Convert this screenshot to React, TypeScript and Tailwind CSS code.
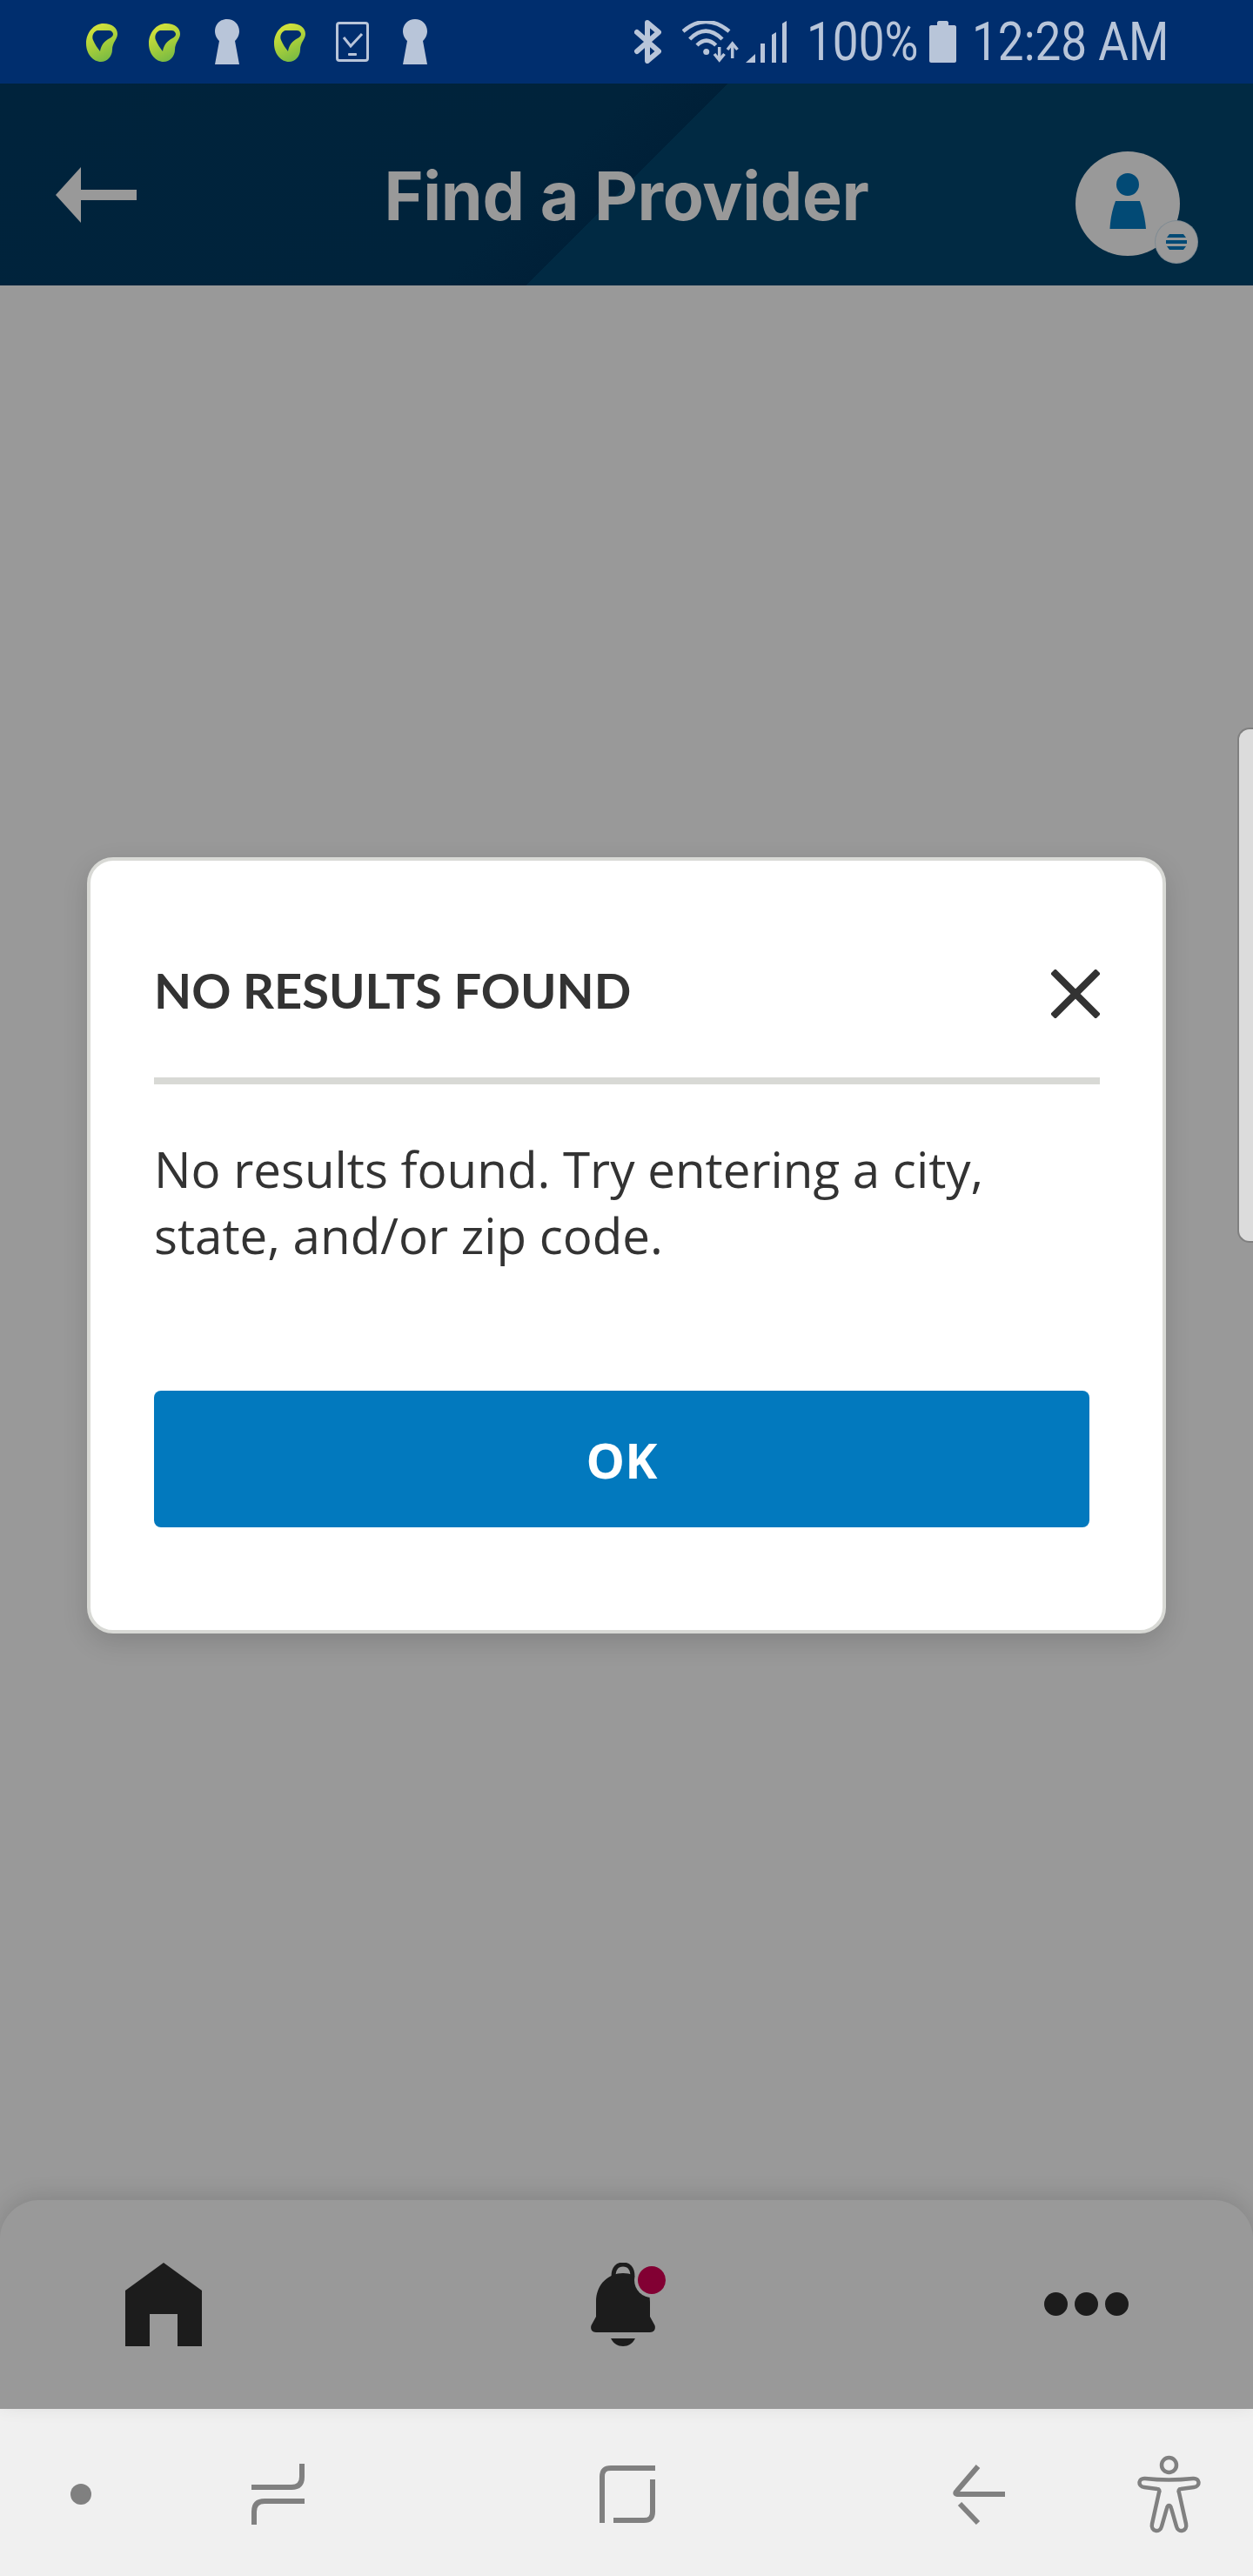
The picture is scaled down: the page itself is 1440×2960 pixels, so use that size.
function Leaf() {
  return (
    <svg width="36" height="44" viewBox="0 0 36 44" className="shrink-0">
      <defs>
        <linearGradient id="leafFill" x1="0.3" y1="0" x2="0.7" y2="1">
          <stop offset="0" stopColor="#d9e43c" />
          <stop offset="0.55" stopColor="#a3cd3b" />
          <stop offset="1" stopColor="#74b845" />
        </linearGradient>
      </defs>
      <path
        fillRule="evenodd"
        fill="url(#leafFill)"
        d="M20 0C30 0 36 5 36 12C36 18 30 22 30 30C30 38 24 44 17 44C8 44 0 35 0 23C0 10 9 0 20 0ZM13 8C9 9 6 14 8 19C10 24 13 28 16 32C17 25 21 20 27 17C31 15 32 12 30 10C29 8 27 8 24 8Z"
      />
    </svg>
  );
}

function Keyhole() {
  return (
    <svg width="28" height="52" viewBox="0 0 28 52" className="shrink-0">
      <path fill="#b8c5d9" d="M14 0C22 0 28 6 28 14C28 19 25 23 23 25L28 52H0L5 25C3 23 0 19 0 14C0 6 6 0 14 0Z" />
    </svg>
  );
}

function PhoneCheck() {
  return (
    <svg width="38" height="46" viewBox="0 0 38 46" fill="none" className="shrink-0">
      <rect x="1.5" y="1.5" width="35" height="43" rx="2.5" stroke="#b8c5d9" strokeWidth="3" />
      <path d="M9 18L17 28L30 14" stroke="#b8c5d9" strokeWidth="3" />
      <rect x="14" y="36" width="10" height="3" rx="1" fill="#b8c5d9" />
    </svg>
  );
}

function Bluetooth() {
  return (
    <svg width="31" height="50" viewBox="0 0 31 50" fill="none">
      <path d="M3 14L28 36L15 47V3L28 14L3 36" stroke="#b8c5d9" strokeWidth="6" strokeLinejoin="round" strokeLinecap="round" />
    </svg>
  );
}

function WifiData() {
  return (
    <svg width="65" height="48" viewBox="0 0 65 48" fill="none" stroke="#b8c5d9" strokeWidth="4.5">
      <path d="M1 12Q27 -10 54 12" />
      <path d="M8.7 21Q27 2.4 46 21" />
      <path d="M17 28Q27.7 17.4 38.7 28" />
      <circle cx="27.7" cy="35.5" r="3.5" fill="#b8c5d9" stroke="none" />
      <path d="M42.7 30V44" strokeWidth="3.5" />
      <path d="M37 38L42.7 45L48.5 38" strokeWidth="3.5" />
      <path d="M57.7 28V43" strokeWidth="3.5" />
      <path d="M52 33L57.7 26L63.5 33" strokeWidth="3.5" />
    </svg>
  );
}

function Signal() {
  return (
    <svg width="48" height="48" viewBox="0 0 48 48" fill="#b8c5d9">
      <path d="M0 48L11 38V48Z" />
      <rect x="17" y="26" width="5" height="22" />
      <path d="M30 16L35 13V48H30Z" />
      <path d="M42 3L47 0V48H42Z" />
    </svg>
  );
}

function Battery() {
  return (
    <svg width="31" height="48" viewBox="0 0 31 48" fill="#b8c5d9">
      <path d="M9 2C9 1 10 0 11 0H20C21 0 22 1 22 2V5H29C30 5 31 6 31 7V46C31 47 30 48 29 48H2C1 48 0 47 0 46V7C0 6 1 5 2 5H9Z" />
    </svg>
  );
}

function StatusBar() {
  return (
    <div className="flex h-[96px] items-start bg-[#002e6e] pl-[99px] pr-[100px]">
      <div className="flex items-start gap-[36px] pt-[22px]">
        <div className="pt-[5px]"><Leaf /></div>
        <div className="pt-[5px]"><Leaf /></div>
        <div className="ml-[4px]"><Keyhole /></div>
        <div className="ml-[4px] pt-[5px]"><Leaf /></div>
        <div className="-ml-[1px] pt-[3px]"><PhoneCheck /></div>
        <div className="ml-[3px]"><Keyhole /></div>
      </div>
      <div className="ml-auto flex items-center pt-[23px]">
        <Bluetooth />
        <div className="ml-[24px]"><WifiData /></div>
        <div className="ml-[8px]"><Signal /></div>
        <span className="ml-[22px] w-[123px] origin-left scale-x-[0.87] whitespace-nowrap font-['Roboto',sans-serif] text-[61px] leading-[50px] text-[#b8c5d9]">100%</span>
        <div className="ml-[18px]"><Battery /></div>
        <span className="ml-[18px] w-[223px] origin-left scale-x-[0.87] whitespace-nowrap font-['Roboto',sans-serif] text-[61px] leading-[50px] text-[#b8c5d9]">12:28 AM</span>
      </div>
    </div>
  );
}

function Avatar() {
  return (
    <div className="relative h-[120px] w-[120px] rounded-full bg-[#999999]">
      <svg width="120" height="120" viewBox="0 0 120 120" className="block">
        <circle cx="60" cy="38" r="13" fill="#024a75" />
        <path d="M46 57H74C78 68 80 78 81 89H39.5C40 78 42 68 46 57Z" fill="#024a75" />
      </svg>
      {/* menu badge */}
      <div className="absolute left-[92px] top-[80px] flex h-[48px] w-[48px] items-center justify-center rounded-full bg-[#999999] ring-1 ring-[#7f8b93]">
        <svg width="24" height="18" viewBox="0 0 24 18" fill="#024a75">
          <path d="M4 0H20C21 1 22 3 23 4H1C2 3 3 1 4 0Z" />
          <rect x="0" y="7" width="24" height="4" />
          <path d="M1 14H23C22 15 21 17 20 18H4C3 17 2 15 1 14Z" />
        </svg>
      </div>
    </div>
  );
}

function Header() {
  return (
    <header className="relative flex h-[232px] items-center justify-center bg-[linear-gradient(135deg,#00233c_0%,#00233b_44%,#002038_50%,#012a43_50%,#012a43_100%)]">
      <svg width="93" height="64" viewBox="0 0 93 64" className="absolute left-[64px] top-[96px]" fill="#999999">
        <path d="M29 0V26H93V38H29V64L0 32Z" />
      </svg>
      <h1 className="mt-[26px] font-['Inter',sans-serif] text-[77px] font-bold leading-none tracking-[-0.3px] text-[#999999]">Find a Provider</h1>
      <div className="absolute left-[1236px] top-[78px]">
        <Avatar />
      </div>
    </header>
  );
}

function Dialog() {
  return (
    <div className="h-[892px] w-[1240px] rounded-[30px] border-4 border-[#d8d9d5] bg-white pl-[73px] pr-[72px] shadow-[0_10px_30px_rgba(0,0,0,0.14)]">
      <div className="flex h-[257px] items-start justify-between border-b-8 border-[#d8d9d5]">
        <h2 className="mt-[121px] font-['Lato',sans-serif] text-[56px] font-bold leading-[56px] text-[#333333]">NO RESULTS FOUND</h2>
        <svg width="56" height="56" viewBox="0 0 56 56" className="mt-[125px]" fill="none">
          <path d="M2 2L54 54M54 2L2 54" stroke="#333333" strokeWidth="8" />
        </svg>
      </div>
      <p className="mt-[60px] font-['Open_Sans',sans-serif] text-[56.5px] leading-[76px] text-[#333333]">
        No results found. Try entering a city,
        <br />
        state, and/or zip code.
      </p>
      <button className="mt-[140px] flex h-[157px] w-[1075px] items-center justify-center rounded-[8px] bg-[#0279be] font-['Open_Sans',sans-serif] text-[56px] font-bold text-white">
        OK
      </button>
    </div>
  );
}

function BottomNav() {
  return (
    <nav className="relative flex h-[240px] items-start rounded-t-[45px] bg-[#999999] shadow-[0_-6px_24px_rgba(0,0,0,0.12)]">
      <svg width="88" height="96" viewBox="0 0 88 96" className="absolute left-[144px] top-[72px]" fill="#1c1c1c">
        <path d="M44 0L88 32V96H60V59H28V96H0V32Z" />
      </svg>
      <svg width="90" height="96" viewBox="0 0 90 96" className="absolute left-[678px] top-[72px]">
        <path d="M27 16C27 6 32 2 38 2C44 2 49 6 49 16" fill="none" stroke="#1c1c1c" strokeWidth="5" />
        <path fill="#1c1c1c" d="M38 12C22 12 7 24 7 45V62L1.5 72C0 77 3 80 7 80H69C73 80 76 77 74.5 72L69 62V45C69 24 54 12 38 12Z" />
        <path fill="#1c1c1c" d="M24 87H52C49 93 44 96 38 96C32 96 27 93 24 87Z" />
        <circle cx="71" cy="20" r="20" fill="#999999" />
        <circle cx="71" cy="20" r="16" fill="#820033" />
      </svg>
      <div className="absolute left-[1200px] top-[106px] flex gap-[8px]">
        <div className="h-[27px] w-[27px] rounded-full bg-[#1c1c1c]" />
        <div className="h-[27px] w-[27px] rounded-full bg-[#1c1c1c]" />
        <div className="h-[27px] w-[27px] rounded-full bg-[#1c1c1c]" />
      </div>
    </nav>
  );
}

function SystemNav() {
  return (
    <div className="h-[192px] bg-[#f0f0f0]">
      <svg width="1440" height="192" viewBox="0 2768 1440 192" fill="none" stroke="#808080" strokeWidth="6" className="block">
        <circle cx="93" cy="2866" r="12" fill="#808080" stroke="none" />
        <path d="M289 2858H335C343 2858 347 2854 347 2846V2831" />
        <path d="M350 2874H304C296 2874 292 2878 292 2886V2901" />
        <path d="M753 2836H702C695 2836 692 2839 692 2846V2899" />
        <path d="M750 2849V2886C750 2893 747 2896 740 2896H705" />
        <path d="M1124 2834L1100 2862C1097 2865 1098 2866 1102 2866H1155" />
        <path d="M1103 2877L1124 2899" />
        <g strokeWidth="4.5">
          <circle cx="1343.5" cy="2832.5" r="8.5" />
          <path d="M1316 2848Q1343 2851 1371 2848C1379 2847 1380 2857 1372 2858L1357 2860C1355 2860 1354 2862 1355 2864L1363 2900C1365 2909 1354 2911 1352 2903L1346 2882C1345 2878 1342 2878 1341 2882L1335 2903C1333 2911 1322 2909 1324 2900L1332 2864C1333 2862 1332 2860 1330 2860L1315 2858C1307 2857 1308 2847 1316 2848Z" />
        </g>
      </svg>
    </div>
  );
}

export default function App() {
  return (
    <div className="flex h-[2960px] w-[1440px] flex-col overflow-hidden bg-[#999999]">
      <StatusBar />
      <Header />
      <main className="relative flex-1 pl-[100px] pt-[657px]">
        <Dialog />
        {/* edge panel handle */}
        <div className="absolute right-0 top-[508px] h-[592px] w-[18px] rounded-l-[14px] border-y-2 border-l-2 border-[#808080] bg-[#dcdcdc]" />
      </main>
      <BottomNav />
      <SystemNav />
    </div>
  );
}
